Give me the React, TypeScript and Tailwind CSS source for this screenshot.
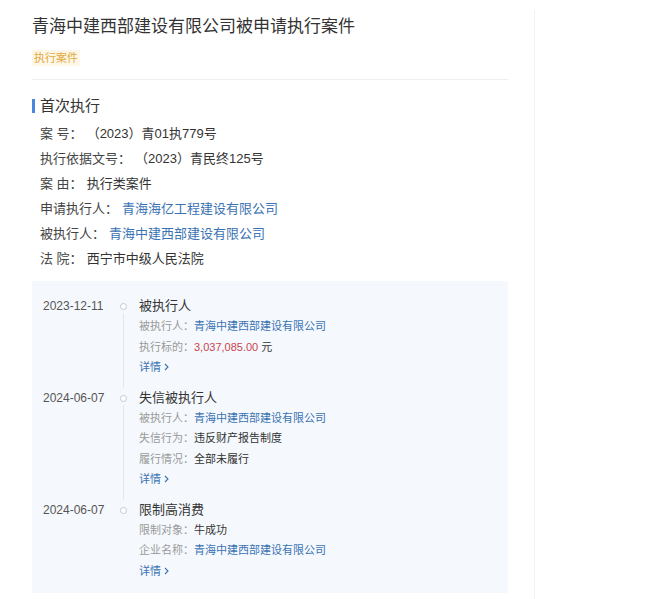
import React from "react";

type Field = { label: string; value: string; kind?: "link" | "money" };

type Event = {
  date: string;
  title: string;
  fields: Field[];
};

const caseInfo: Field[] = [
  { label: "案 号：", value: "（2023）青01执779号" },
  { label: "执行依据文号：", value: "（2023）青民终125号" },
  { label: "案 由：", value: "执行类案件" },
  { label: "申请执行人：", value: "青海海亿工程建设有限公司", kind: "link" },
  { label: "被执行人：", value: "青海中建西部建设有限公司", kind: "link" },
  { label: "法 院：", value: "西宁市中级人民法院" },
];

const events: Event[] = [
  {
    date: "2023-12-11",
    title: "被执行人",
    fields: [
      { label: "被执行人：", value: "青海中建西部建设有限公司", kind: "link" },
      { label: "执行标的：", value: "3,037,085.00", kind: "money" },
    ],
  },
  {
    date: "2024-06-07",
    title: "失信被执行人",
    fields: [
      { label: "被执行人：", value: "青海中建西部建设有限公司", kind: "link" },
      { label: "失信行为：", value: "违反财产报告制度" },
      { label: "履行情况：", value: "全部未履行" },
    ],
  },
  {
    date: "2024-06-07",
    title: "限制高消费",
    fields: [
      { label: "限制对象：", value: "牛成功" },
      { label: "企业名称：", value: "青海中建西部建设有限公司", kind: "link" },
    ],
  },
];

function TimelineItem({ item, last }: { item: Event; last: boolean }) {
  return (
    <div className={"flex " + (last ? "" : "pb-[10px]")}>
      <div className="w-[75px] text-[12px] leading-[20px] text-[#555]">{item.date}</div>
      <div className="w-[10px] flex flex-col items-center">
        <div className="mt-[7px] w-[7px] h-[7px] rounded-full border border-[#c4c9cf] bg-white"></div>
        {!last && <div className="w-px grow bg-[#e3e7ec] -mb-[10px] mt-[3px]"></div>}
      </div>
      <div className="ml-[11px] flex flex-col">
        <div className="text-[13px] leading-[20px] text-[#333]">{item.title}</div>
        {item.fields.map((f) => (
          <div key={f.label} className="text-[11px] leading-[20.5px] text-[#999] flex">
            <span>{f.label}</span>
            {f.kind === "link" && <span className="text-[#3a72b3]">{f.value}</span>}
            {f.kind === "money" && (
              <span>
                <span className="text-[#c9444e]">{f.value}</span>
                <span className="text-[#333] ml-[3px]">元</span>
              </span>
            )}
            {!f.kind && <span className="text-[#333]">{f.value}</span>}
          </div>
        ))}
        <div className="text-[11px] leading-[20.5px] text-[#3a72b3] flex items-center gap-[3px]">
          详情
          <svg width="5" height="8" viewBox="0 0 5 8" fill="none">
            <path d="M1 1l3 3-3 3" stroke="#3a72b3" strokeWidth="1.1" />
          </svg>
        </div>
      </div>
    </div>
  );
}

export default function App() {
  return (
    <div className="w-[660px] h-[599px] bg-white flex overflow-hidden font-['Liberation_Sans','Noto_Sans_CJK_SC',sans-serif]">
      <div className="w-[535px] mt-[10px] pl-8 pr-[26px] pt-[5px] border-r border-[#f1f2f4]">
        <h1 className="text-[17px] leading-[24px] text-[#333]">青海中建西部建设有限公司被申请执行案件</h1>
        <div className="mt-[11px] flex">
          <span className="h-[16px] px-[2px] text-[11px] leading-[16px] text-[#e5a93c] bg-[#fdf7e8]">执行案件</span>
        </div>
        <div className="mt-[13px] border-t border-[#eeeff1]"></div>

        <div className="mt-[16px] flex items-center">
          <div className="w-[3px] h-[14px] bg-[#4a86e0]"></div>
          <div className="ml-[5px] text-[15px] leading-[20px] text-[#333]">首次执行</div>
        </div>

        <div className="mt-[5px] pl-2 flex flex-col">
          {caseInfo.map((f) => (
            <div key={f.label} className="flex text-[13px] leading-[25px]">
              <span className="text-[#444]">{f.label}</span>
              <span className={"ml-[4px] " + (f.kind === "link" ? "text-[#3a72b3]" : "text-[#333]")}>{f.value}</span>
            </div>
          ))}
        </div>

        <div className="mt-[10px] bg-[#f5f9fd] pt-[15px] pb-[12px] pl-[11px]">
          {events.map((e, i) => (
            <TimelineItem key={i} item={e} last={i === events.length - 1} />
          ))}
        </div>
      </div>
      <div className="grow"></div>
    </div>
  );
}
